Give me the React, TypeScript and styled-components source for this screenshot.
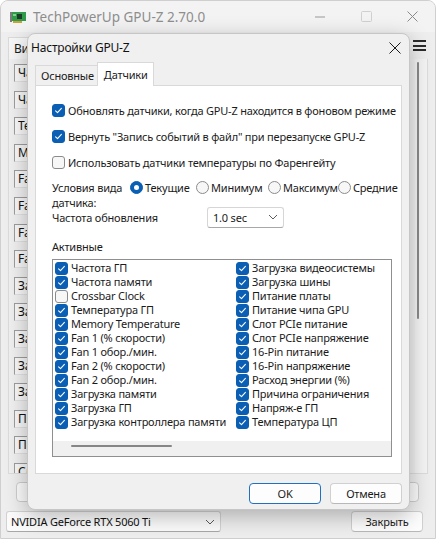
import React from 'react'
import styled, { createGlobalStyle } from 'styled-components'

const GlobalStyle = createGlobalStyle`
  html, body { margin: 0; padding: 0; }
  body {
    background: #ffffff;
    font-family: 'Noto Sans', 'Liberation Sans', sans-serif;
    font-size: 11px;
    letter-spacing: -0.2px;
    color: #1b1b1b;
    overflow: hidden;
  }
`

const mainSensors = [
  'Частота ГП', 'Частота памяти', 'Температура ГП', 'Memory Temperature',
  'Fan 1 (% скорости)', 'Fan 1 обор./мин.', 'Fan 2 (% скорости)', 'Fan 2 обор./мин.',
  'Загрузка памяти', 'Загрузка ГП', 'Загрузка контроллера памяти', 'Загрузка видеосистемы',
  'Загрузка шины', 'Питание платы', 'Питание чипа GPU', 'Слот PCIe питание'
]

const activeSensors: [string, boolean][] = [
  ['Частота ГП', true], ['Частота памяти', true], ['Crossbar Clock', false],
  ['Температура ГП', true], ['Memory Temperature', true], ['Fan 1 (% скорости)', true],
  ['Fan 1 обор./мин.', true], ['Fan 2 (% скорости)', true], ['Fan 2 обор./мин.', true],
  ['Загрузка памяти', true], ['Загрузка ГП', true], ['Загрузка контроллера памяти', true],
  ['Загрузка видеосистемы', true], ['Загрузка шины', true], ['Питание платы', true],
  ['Питание чипа GPU', true], ['Слот PCIe питание', true], ['Слот PCIe напряжение', true],
  ['16-Pin питание', true], ['16-Pin напряжение', true], ['Расход энергии (%)', true],
  ['Причина ограничения', true], ['Напряж-е ГП', true], ['Температура ЦП', true]
]

const radios = [
  { label: 'Текущие', width: 66, checked: true },
  { label: 'Минимум', width: 72, checked: false },
  { label: 'Максимум', width: 70, checked: false },
  { label: 'Средние', width: 0, checked: false }
]

/* ---------- main window (behind) ---------- */

const MainWindow = styled.div`
  width: 436px;
  height: 539px;
  box-sizing: border-box;
  background: #eeeeee;
  border: 1px solid #cfcfcf;
  border-radius: 8px 8px 0 0;
  display: flex;
  flex-direction: column;
  overflow: hidden;
`

const TitleBar = styled.div`
  height: 31px;
  display: flex;
  align-items: center;
  padding-left: 9px;
  background: #f3f3f3;
`

const AppTitle = styled.span`
  margin-left: 7px;
  color: #8e8e8e;
  font-size: 13.5px;
  letter-spacing: 0;
  flex: 1;
`

const WinControl = styled.div`
  width: 46px;
  height: 31px;
  display: flex;
  align-items: center;
  justify-content: center;
`

const MenuRow = styled.div`
  height: 27px;
  display: flex;
  align-items: flex-end;
  justify-content: space-between;
  padding: 0 9px 0 7px;
`

const MainTab = styled.div`
  width: 40px;
  height: 21px;
  padding-left: 5px;
  display: flex;
  align-items: center;
  overflow: hidden;
  white-space: nowrap;
  font-size: 12px;
  background: #f6f6f6;
  border: 1px solid #dadada;
  border-bottom: none;
  span { display: block; width: 17px; overflow: hidden; }
`

const Hamburger = styled.div`
  width: 13px;
  height: 11px;
  margin-bottom: 8px;
  display: flex;
  flex-direction: column;
  justify-content: space-between;
  span { display: block; height: 2px; background: #2b2b2b; }
`

const SensorPanel = styled.div`
  height: 414px;
  margin: 0 7px;
  display: flex;
  border: 1px solid #dcdcdc;
  border-top: none;
  background: #f0f0f0;
`

const SensorList = styled.div`
  flex: 1;
  overflow: hidden;
  padding: 5px 0 0 5px;
`

const SensorRow = styled.div`
  height: 26.6px;
  display: flex;
  align-items: flex-start;
`

const SensorBox = styled.div`
  width: 36px;
  height: 18px;
  box-sizing: border-box;
  padding-left: 3px;
  line-height: 16px;
  font-size: 12px;
  white-space: nowrap;
  overflow: hidden;
  background: #f8f8f8;
  border: 1px solid #e2e2e2;
  border-top-color: #9d9d9d;
  border-left-color: #9d9d9d;
  color: #111;
  span { display: block; width: 12px; overflow: hidden; }
`

const MainScroll = styled.div`
  width: 10px;
  padding: 3px 0 0 2px;
  background: #f4f4f4;
  span { display: block; width: 2px; height: 257px; background: #8a8a8a; border-radius: 1px; }
`

const MainFooter = styled.div`
  display: flex;
  justify-content: space-between;
  padding: 8px 16px 0 15px;
`

const GhostButton = styled.div<{ $w: number }>`
  width: ${p => p.$w}px;
  height: 20px;
  box-sizing: border-box;
  border: 1px solid #cdcdcd;
  border-radius: 4px;
  background: #fbfbfb;
`

const BottomRow = styled.div`
  display: flex;
  justify-content: space-between;
  align-items: center;
  padding: 9px 12px 0 5px;
`

const GpuCombo = styled.div`
  width: 215px;
  height: 21px;
  box-sizing: border-box;
  display: flex;
  align-items: center;
  justify-content: space-between;
  padding: 0 5px 0 4px;
  background: #fbfbfb;
  border: 1px solid #d2d2d2;
  border-bottom-color: #a8a8a8;
  border-radius: 3px;
  color: #111;
`

const Button = styled.button<{ $primary?: boolean; $w: number }>`
  width: ${p => p.$w}px;
  height: 21px;
  box-sizing: border-box;
  padding: 0;
  font: inherit;
  letter-spacing: inherit;
  color: #1b1b1b;
  background: #fdfdfd;
  border: 1px solid ${p => (p.$primary ? '#1f6fc2' : '#d0d0d0')};
  border-bottom-color: ${p => (p.$primary ? '#1f6fc2' : '#b8b8b8')};
  border-radius: 4px;
  box-shadow: ${p => (p.$primary ? 'inset 0 0 0 1px #ffffff' : 'none')};
`

/* ---------- settings dialog (on top) ---------- */

const Dialog = styled.div`
  position: absolute;
  left: 27px;
  top: 33px;
  width: 383px;
  height: 477px;
  box-sizing: border-box;
  background: #f0f0f0;
  border: 1px solid #c6c6c6;
  border-radius: 8px;
  box-shadow: 0 6px 22px rgba(0, 0, 0, 0.28);
  display: flex;
  flex-direction: column;
`

const DialogTitle = styled.div`
  height: 27px;
  display: flex;
  align-items: center;
  justify-content: space-between;
  padding: 0 8px 0 3px;
  font-size: 12px;
  color: #111;
`

const TabStrip = styled.div`
  height: 24px;
  display: flex;
  align-items: flex-end;
  padding-left: 7px;
`

const Tab = styled.div<{ $active?: boolean }>`
  height: ${p => (p.$active ? 24 : 20)}px;
  box-sizing: border-box;
  padding: 0 ${p => (p.$active ? 6 : 5)}px;
  ${p => (p.$active ? 'padding-right: 5px;' : 'padding-right: 3px;')}
  display: flex;
  align-items: center;
  background: ${p => (p.$active ? '#ffffff' : '#f0f0f0')};
  border: 1px solid #d9d9d9;
  border-bottom: none;
  ${p => (p.$active ? 'margin-bottom: -1px; position: relative; z-index: 1;' : 'border-right: none;')}
`

const TabPanel = styled.div`
  height: 389px;
  margin: 0 7px;
  box-sizing: border-box;
  background: #ffffff;
  border: 1px solid #d9d9d9;
  padding: 14px 9px 0 16px;
  display: flex;
  flex-direction: column;
`

const CheckRow = styled.label`
  height: 20px;
  display: flex;
  align-items: center;
  gap: 3px;
  margin-bottom: 6px;
  white-space: nowrap;
`

const Box = styled.span<{ $on: boolean }>`
  width: 13px;
  height: 13px;
  flex: none;
  box-sizing: border-box;
  border-radius: 3px;
  display: flex;
  align-items: center;
  justify-content: center;
  background: ${p => (p.$on ? '#0a5fb4' : '#f7f7f7')};
  border: 1px solid ${p => (p.$on ? '#0a5fb4' : '#8b8b8b')};
`

const RadioRow = styled.div`
  height: 27px;
  margin-top: 2px;
  display: flex;
  align-items: flex-start;
`

const RadioLabel = styled.div`
  width: 78px;
  flex: none;
  line-height: 15px;
`

const RadioOption = styled.div<{ $w: number }>`
  ${p => (p.$w ? `width: ${p.$w}px;` : '')}
  flex: none;
  height: 15px;
  display: flex;
  align-items: center;
  gap: 2px;
  white-space: nowrap;
`

const Radio = styled.span<{ $on: boolean }>`
  width: 13px;
  height: 13px;
  flex: none;
  box-sizing: border-box;
  border-radius: 50%;
  background: ${p => (p.$on ? '#0a5fb4' : '#f7f7f7')};
  border: 1px solid ${p => (p.$on ? '#0a5fb4' : '#8b8b8b')};
  display: flex;
  align-items: center;
  justify-content: center;
  &::after {
    content: '';
    display: ${p => (p.$on ? 'block' : 'none')};
    width: 5px;
    height: 5px;
    border-radius: 50%;
    background: #ffffff;
  }
`

const FreqRow = styled.div`
  height: 20px;
  display: flex;
  align-items: center;
`

const FreqLabel = styled.div`
  width: 155px;
  flex: none;
`

const Combo = styled.div`
  width: 77px;
  height: 21px;
  box-sizing: border-box;
  display: flex;
  align-items: center;
  justify-content: space-between;
  padding: 0 5px 0 5px;
  background: #ffffff;
  border: 1px solid #d6d6d6;
  border-bottom-color: #a8a8a8;
  border-radius: 3px;
`

const SectionLabel = styled.div`
  margin-top: 13px;
  height: 14px;
  line-height: 14px;
`

const ListBox = styled.div`
  margin-top: 5px;
  width: 340px;
  height: 198px;
  box-sizing: border-box;
  border: 1px solid #8f8f8f;
  display: flex;
  flex-direction: column;
`

const ListGrid = styled.div`
  flex: 1;
  padding: 1px 0 0 2px;
  display: grid;
  grid-auto-flow: column;
  grid-template-rows: repeat(12, 14px);
  grid-template-columns: 181px 150px;
  overflow: hidden;
`

const ListItem = styled.div`
  display: flex;
  align-items: center;
  gap: 3px;
  white-space: nowrap;
  line-height: 14px;
`

const HScroll = styled.div`
  height: 15px;
  flex: none;
  background: #f0f0f0;
  padding: 4px 0 0 18px;
  box-sizing: border-box;
  span { display: block; width: 101px; height: 2px; border-radius: 1px; background: #868686; }
`

const DialogFooter = styled.div`
  display: flex;
  justify-content: flex-end;
  gap: 9px;
  padding: 9px 7px 0 0;
`

const Check = () => (
  <svg width='9' height='9' viewBox='0 0 9 9'>
    <path d='M1.6 4.8 L3.5 6.6 L7.4 2.4' fill='none' stroke='#ffffff' strokeWidth='1.1' strokeLinecap='round' strokeLinejoin='round' />
  </svg>
)

const CheckBox = ({ on }: { on: boolean }) => <Box $on={on}>{on && <Check />}</Box>

const Chevron = () => (
  <svg width='10' height='6' viewBox='0 0 10 6'>
    <path d='M1 1 L5 5 L9 1' fill='none' stroke='#5c5c5c' strokeWidth='1' />
  </svg>
)

const GpuIcon = () => (
  <svg width='16' height='12' viewBox='0 0 16 12'>
    <rect x='0' y='1' width='2' height='10' fill='#7a7a7a' />
    <rect x='2' y='1' width='14' height='9' fill='#2f9a4a' />
    <rect x='3' y='10' width='9' height='2' fill='#c9a13b' />
    <rect x='7' y='3' width='5' height='5' fill='#1b3b25' />
    <rect x='3' y='3' width='3' height='2' fill='#7fd18c' />
  </svg>
)

function App () {
  return (
    <>
      <GlobalStyle />
      <MainWindow>
        <TitleBar>
          <GpuIcon />
          <AppTitle>TechPowerUp GPU-Z 2.70.0</AppTitle>
          <WinControl>
            <svg width='10' height='2' viewBox='0 0 10 2'><rect width='10' height='1' y='0.5' fill='#9a9a9a' /></svg>
          </WinControl>
          <WinControl>
            <svg width='11' height='11' viewBox='0 0 11 11'><rect x='0.5' y='0.5' width='10' height='10' rx='1' fill='none' stroke='#d0d0d0' /></svg>
          </WinControl>
          <WinControl>
            <svg width='11' height='11' viewBox='0 0 11 11'><path d='M0.5 0.5 L10.5 10.5 M10.5 0.5 L0.5 10.5' stroke='#8a8a8a' strokeWidth='1' /></svg>
          </WinControl>
        </TitleBar>
        <MenuRow>
          <MainTab><span>Ви</span></MainTab>
          <Hamburger><span /><span /><span /></Hamburger>
        </MenuRow>
        <SensorPanel>
          <SensorList>
            {mainSensors.map(s => (
              <SensorRow key={s}><SensorBox><span>{s.slice(0, 2)}</span></SensorBox></SensorRow>
            ))}
          </SensorList>
          <MainScroll><span /></MainScroll>
        </SensorPanel>
        <MainFooter>
          <GhostButton $w={110} />
          <GhostButton $w={80} />
        </MainFooter>
        <BottomRow>
          <GpuCombo>
            <span>NVIDIA GeForce RTX 5060 Ti</span>
            <Chevron />
          </GpuCombo>
          <Button $w={72}>Закрыть</Button>
        </BottomRow>
      </MainWindow>

      <Dialog>
        <DialogTitle>
          <span>Настройки GPU-Z</span>
          <svg width='12' height='12' viewBox='0 0 12 12'>
            <path d='M0.5 0.5 L11.5 11.5 M11.5 0.5 L0.5 11.5' stroke='#1b1b1b' strokeWidth='1' />
          </svg>
        </DialogTitle>
        <TabStrip>
          <Tab>Основные</Tab>
          <Tab $active>Датчики</Tab>
        </TabStrip>
        <TabPanel>
          <CheckRow><CheckBox on />Обновлять датчики, когда GPU-Z находится в фоновом режиме</CheckRow>
          <CheckRow><CheckBox on />Вернуть "Запись событий в файл" при перезапуске GPU-Z</CheckRow>
          <CheckRow><CheckBox on={false} />Использовать датчики температуры по Фаренгейту</CheckRow>
          <RadioRow>
            <RadioLabel>Условия вида датчика:</RadioLabel>
            {radios.map(r => (
              <RadioOption key={r.label} $w={r.width}>
                <Radio $on={r.checked} />
                {r.label}
              </RadioOption>
            ))}
          </RadioRow>
          <FreqRow>
            <FreqLabel>Частота обновления</FreqLabel>
            <Combo>
              <span>1.0 sec</span>
              <Chevron />
            </Combo>
          </FreqRow>
          <SectionLabel>Активные</SectionLabel>
          <ListBox>
            <ListGrid>
              {activeSensors.map(([name, on]) => (
                <ListItem key={name}>
                  <CheckBox on={on} />
                  {name}
                </ListItem>
              ))}
            </ListGrid>
            <HScroll><span /></HScroll>
          </ListBox>
        </TabPanel>
        <DialogFooter>
          <Button $primary $w={72}>OK</Button>
          <Button $w={72}>Отмена</Button>
        </DialogFooter>
      </Dialog>
    </>
  )
}

export default App
